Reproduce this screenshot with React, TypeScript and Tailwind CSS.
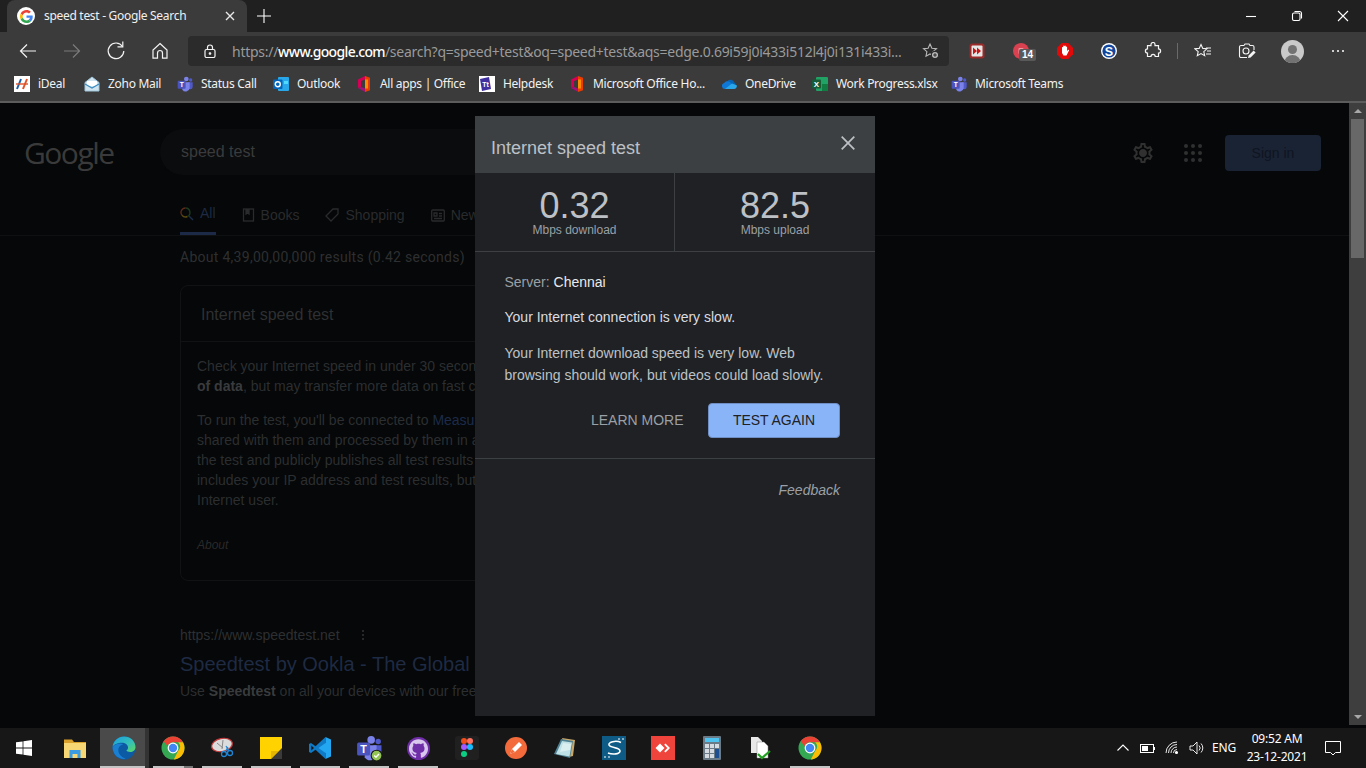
import { ReactNode } from "react";
import { SiGithub } from "react-icons/si";

const ui = "font-['Noto_Sans','Open_Sans',sans-serif]";
const arial = "font-['Liberation_Sans',Arial,sans-serif]";

function GoogleG({ size = 16 }: { size?: number }) {
  return (
    <svg width={size} height={size} viewBox="0 0 48 48">
      <path fill="#EA4335" d="M24 9.5c3.54 0 6.71 1.22 9.21 3.6l6.85-6.85C35.9 2.38 30.47 0 24 0 14.62 0 6.51 5.38 2.56 13.22l7.98 6.19C12.43 13.72 17.74 9.5 24 9.5z" />
      <path fill="#4285F4" d="M46.98 24.55c0-1.57-.15-3.09-.38-4.55H24v9.02h12.94c-.58 2.96-2.26 5.48-4.78 7.18l7.73 6c4.51-4.18 7.09-10.36 7.09-17.65z" />
      <path fill="#FBBC05" d="M10.53 28.59c-.48-1.45-.76-2.99-.76-4.59s.27-3.14.76-4.59l-7.98-6.19C.92 16.46 0 20.12 0 24c0 3.88.92 7.54 2.56 10.78l7.97-6.19z" />
      <path fill="#34A853" d="M24 48c6.48 0 11.93-2.13 15.89-5.81l-7.73-6c-2.15 1.45-4.92 2.3-8.16 2.3-6.26 0-11.57-4.22-13.47-9.91l-7.98 6.19C6.51 42.62 14.62 48 24 48z" />
    </svg>
  );
}

function Chrome() {
  return (
    <svg width="24" height="24" viewBox="0 0 24 24">
      <circle cx="12" cy="12" r="11.5" fill="#34a853" />
      <path fill="#ea4335" d="M12 .5a11.5 11.5 0 0 1 10 5.8H12a5.7 5.7 0 0 0-5.3 3.6L2.6 5.4A11.5 11.5 0 0 1 12 .5z" />
      <path fill="#fbbc05" d="M22 6.3a11.5 11.5 0 0 1-9.2 17.2l4.3-8.5a5.7 5.7 0 0 0 .1-8.7z" />
      <circle cx="12" cy="12" r="5.4" fill="#fff" />
      <circle cx="12" cy="12" r="4.2" fill="#4285f4" />
    </svg>
  );
}

function Edge() {
  return (
    <svg width="24" height="24" viewBox="0 0 24 24">
      <defs>
        <linearGradient id="edgeTop" x1="0" y1="0" x2="1" y2="1">
          <stop offset="0" stopColor="#1b9de2" />
          <stop offset="0.6" stopColor="#35c1b4" />
          <stop offset="1" stopColor="#5fd85a" />
        </linearGradient>
      </defs>
      <circle cx="12" cy="12" r="11.5" fill="#0c59a4" />
      <path fill="url(#edgeTop)" d="M.6 11C1.2 5 6 .5 12 .5c6.4 0 11.5 4.8 11.5 10.5 0 3.2-2.6 5-5.4 5-1.8 0-3.4-.6-3.8-1.4 1.2-.8 1.7-1.9 1.7-3.1 0-2.8-3-4.7-6-4.7C5.5 6.8 1.8 8.5.6 11z" />
      <path fill="#1a7fd0" d="M.6 11c1.5-2.2 4.5-3.4 7.3-3.4 1.2 0 2.3.3 3.2.8-3.3.5-4.8 3-4.8 5.6 0 3.7 3 7.4 7.4 8.7-.5.2-1 .3-1.7.3C5.6 23 .5 18 .6 11z" />
    </svg>
  );
}

function Teams({ size = 16, check = false }: { size?: number; check?: boolean }) {
  return (
    <svg width={size} height={size} viewBox="0 0 24 24">
      <circle cx="14" cy="4.5" r="3.5" fill="#7b83eb" />
      <circle cx="20.5" cy="6" r="2.5" fill="#5059c9" />
      <path fill="#5059c9" d="M16 9.5h7.5v7a3.5 3.5 0 0 1-7 0z" />
      <path fill="#7b83eb" d="M8 9.5h11v9a6 6 0 0 1-11 2z" />
      <rect x="1" y="7" width="12" height="12" rx="1.5" fill="#4b53bc" />
      <text x="7" y="16.5" textAnchor="middle" fontSize="10" fontWeight="700" fill="#fff" fontFamily="Liberation Sans">T</text>
      {check && (
        <>
          <circle cx="19" cy="19" r="5" fill="#92c353" stroke="#171717" strokeWidth="1" />
          <path d="M16.8 19l1.6 1.6 2.8-3" stroke="#fff" strokeWidth="1.3" fill="none" />
        </>
      )}
    </svg>
  );
}

function Office() {
  return (
    <svg width="16" height="16" viewBox="0 0 16 16">
      <path fill="#eb3c00" d="M9 0l5 1.8v12.4L9 16z" />
      <path fill="#ff8c00" d="M9 3.5H12v9H9z" />
      <path fill="#d40055" d="M2 3.4L9 0v3.5L5 5v6l-3 1z" />
      <path fill="#a0127a" d="M2 12l7 4v-3.5L5 11z" />
    </svg>
  );
}

function BookmarkIcon({ name }: { name: string }) {
  if (name === "ideal")
    return (
      <div className="flex h-4 w-4 items-center justify-center bg-white">
        <svg width="14" height="12" viewBox="0 0 14 12" fill="none" strokeWidth="2">
          <path d="M6 1L2 11" stroke="#1b5fa8" />
          <path d="M12 1L8 11" stroke="#e0532a" />
          <path d="M1 6h12" stroke="#e0532a" strokeWidth="1.4" />
        </svg>
      </div>
    );
  if (name === "zoho")
    return (
      <svg width="16" height="16" viewBox="0 0 16 16" fill="none">
        <path d="M1 6.5L8 1l7 5.5V15H1z" fill="#cfe3ee" stroke="#9ec6dc" />
        <rect x="3" y="5" width="10" height="5" fill="#fff" />
        <path d="M1 8l7 4 7-4" stroke="#3c8cc0" strokeWidth="1.3" />
      </svg>
    );
  if (name === "teams") return <Teams />;
  if (name === "outlook")
    return (
      <svg width="16" height="16" viewBox="0 0 16 16">
        <rect x="5" y="1" width="11" height="14" rx="1" fill="#28a8ea" />
        <rect x="0" y="3.5" width="9.5" height="9.5" rx="1" fill="#0364b8" />
        <circle cx="4.75" cy="8.25" r="2.5" fill="none" stroke="#fff" strokeWidth="1.4" />
        <rect x="11" y="5" width="4" height="3" fill="#50d9ff" />
      </svg>
    );
  if (name === "office") return <Office />;
  if (name === "helpdesk")
    return (
      <svg width="16" height="16" viewBox="0 0 16 16">
        <rect width="16" height="16" fill="#fff" />
        <path d="M1 3l9-2 2 12-9 2z" fill="#3f2f9f" />
        <text x="6.5" y="11" textAnchor="middle" fontSize="7" fontWeight="700" fill="#fff" fontFamily="Liberation Sans">Tt</text>
      </svg>
    );
  if (name === "onedrive")
    return (
      <svg width="16" height="16" viewBox="0 0 16 16">
        <path fill="#0364b8" d="M6.5 5a4 4 0 0 1 6.8 1.5A3 3 0 0 1 12.5 12H8z" />
        <path fill="#0f78d4" d="M4 13a3 3 0 0 1-.8-5.9A4 4 0 0 1 9 6l3 3.5L8 13z" />
        <path fill="#28a8ea" d="M4 13h9a2.9 2.9 0 0 0 2.7-3.8L11 7.5z" />
      </svg>
    );
  return (
    <svg width="16" height="16" viewBox="0 0 16 16">
      <rect x="4" y="1" width="12" height="14" rx="1" fill="#21a366" />
      <rect x="10" y="8" width="6" height="7" fill="#107c41" />
      <rect x="0" y="3.5" width="9" height="9" rx="1" fill="#185c37" />
      <text x="4.5" y="11" textAnchor="middle" fontSize="8" fontWeight="700" fill="#fff" fontFamily="Liberation Sans">X</text>
    </svg>
  );
}

const bookmarks = [
  { name: "ideal", label: "iDeal", w: "w-[70px]" },
  { name: "zoho", label: "Zoho Mail", w: "w-[93px]" },
  { name: "teams", label: "Status Call", w: "w-[96px]" },
  { name: "outlook", label: "Outlook", w: "w-[83px]" },
  { name: "office", label: "All apps | Office", w: "w-[123px]" },
  { name: "helpdesk", label: "Helpdesk", w: "w-[90px]" },
  { name: "office", label: "Microsoft Office Ho...", w: "w-[152px]" },
  { name: "onedrive", label: "OneDrive", w: "w-[91px]" },
  { name: "excel", label: "Work Progress.xlsx", w: "w-[139px]" },
  { name: "teams", label: "Microsoft Teams", w: "w-[130px]" },
];

function Stroke({ children, size = 20, box = 20 }: { children: ReactNode; size?: number; box?: number }) {
  return (
    <svg width={size} height={size} viewBox={`0 0 ${box} ${box}`} fill="none" stroke="currentColor" strokeWidth="1.1">
      {children}
    </svg>
  );
}

function TitleBar() {
  return (
    <div className="flex h-8 bg-[#202020] pl-[7px] text-white">
      <div className="flex w-[240px] items-center rounded-t-lg bg-[#3b3b3b] pl-[10px]">
        <div className="flex h-[18px] w-[18px] items-center justify-center rounded-full bg-white">
          <GoogleG size={13} />
        </div>
        <span className={`${ui} ml-[9px] flex-1 text-[12px] tracking-[-0.3px] text-[#f0f0f0]`}>speed test - Google Search</span>
        <div className="mr-[9px] text-[#e8e8e8]">
          <Stroke size={16} box={16}>
            <path d="M4 4l8 8M12 4l-8 8" strokeWidth="1.4" />
          </Stroke>
        </div>
      </div>
      <div className="ml-[8px] flex w-[18px] items-center justify-center">
        <Stroke size={16} box={16}>
          <path d="M8 1v14M1 8h14" strokeWidth="1.1" />
        </Stroke>
      </div>
      <div className="ml-auto flex">
        <div className="flex w-[46px] items-center justify-center">
          <Stroke size={12} box={12}><path d="M1 6.5h10" /></Stroke>
        </div>
        <div className="flex w-[46px] items-center justify-center">
          <Stroke size={12} box={12}>
            <rect x="1.5" y="3" width="7.5" height="7.5" rx="1.5" />
            <path d="M3.5 1.5h5a2 2 0 0 1 2 2v5" />
          </Stroke>
        </div>
        <div className="flex w-[46px] items-center justify-center">
          <Stroke size={12} box={12}><path d="M1 1l10 10M11 1L1 11" /></Stroke>
        </div>
      </div>
    </div>
  );
}

function Ext({ children, wide = "w-[44px]" }: { children: ReactNode; wide?: string }) {
  return <div className={`relative flex ${wide} items-center justify-center`}>{children}</div>;
}

function Toolbar() {
  return (
    <div className="flex h-[36px] items-center bg-[#3b3b3b] pt-[2px] text-[#f4f4f4]">
      <div className="flex w-[188px] pl-[6px]">
        <Ext>
          <Stroke>
            <path d="M18 10H2.5M9 3.5L2.5 10 9 16.5" strokeWidth="1.2" />
          </Stroke>
        </Ext>
        <Ext>
          <div className="text-[#7b7b7b]">
            <Stroke><path d="M2 10h15.5M11 3.5l6.5 6.5-6.5 6.5" strokeWidth="1.2" /></Stroke>
          </div>
        </Ext>
        <Ext>
          <Stroke>
            <path d="M16.5 5.5A7.8 7.8 0 1 0 17.8 10" strokeWidth="1.2" />
            <path d="M11.5 5.8h5.3V.5" strokeWidth="1.2" />
          </Stroke>
        </Ext>
        <Ext>
          <Stroke>
            <path d="M10 2.5L17 9v8.2h-4.5V12a2.5 2.5 0 0 0-5 0v5.2H3V9z" strokeWidth="1.2" />
          </Stroke>
        </Ext>
      </div>
      <div className="flex h-[30px] w-[761px] items-center rounded bg-[#2b2b2b] pl-[15px]">
        <Stroke size={14} box={14}>
          <rect x="2" y="5.5" width="10" height="8" rx="1.5" strokeWidth="1.2" />
          <path d="M4.5 5.5V3.5a2.5 2.5 0 0 1 5 0v2" strokeWidth="1.2" />
          <circle cx="7" cy="9.5" r=".8" fill="currentColor" />
        </Stroke>
        <div className={`${ui} ml-[15px] w-[672px] whitespace-nowrap text-[14px] tracking-[-0.27px] text-[#9a9a9a]`}>
          https://<span className="font-medium tracking-[-0.65px] text-white">www.google.com</span>/search?q=speed+test&amp;oq=speed+test&amp;aqs=edge.0.69i59j0i433i512l4j0i131i433i...
        </div>
        <div className="ml-[18px] text-[#b8b8b8]">
          <Stroke size={18} box={18}>
            <path d="M8 2l1.9 4.2 4.6.5-3.4 3 .9 4.5L8 12l-4 2.2.9-4.5-3.4-3 4.6-.5z" />
            <circle cx="13" cy="13" r="3.6" fill="#b8b8b8" stroke="#2b2b2b" />
            <path d="M13 11.2v3.6M11.2 13h3.6" stroke="#2b2b2b" />
          </Stroke>
        </div>
      </div>
      <div className="ml-[6px] flex">
        <Ext>
          <svg width="16" height="16" viewBox="0 0 16 16">
            <rect x=".5" y=".5" width="15" height="15" rx="2.5" fill="#9c2a2a" />
            <rect x="2.5" y="2.5" width="11" height="11" rx="1" fill="#e6e6e6" />
            <path d="M4 4.5l4 3.5-4 3.5zM8 4.5l4 3.5-4 3.5z" fill="#c41818" />
          </svg>
        </Ext>
        <Ext>
          <svg width="16" height="16" viewBox="0 0 16 16">
            <circle cx="8" cy="8" r="8" fill="#d8414f" />
            <rect x="5.5" y="5" width="5" height="6" rx="1" fill="#eb9aa2" />
          </svg>
          <span className="absolute left-[20px] top-[9px] rounded-[2px] bg-[#595959] px-[3px] font-['Liberation_Sans'] text-[10px] font-bold leading-[12px] text-white">14</span>
        </Ext>
        <Ext>
          <svg width="16" height="16" viewBox="0 0 16 16">
            <path fill="#e10a0a" d="M4.7 0h6.6L16 4.7v6.6L11.3 16H4.7L0 11.3V4.7z" />
            <path fill="#fff" d="M5 7V4.5a.7.7 0 0 1 1.2-.2V3a.7.7 0 0 1 1.3 0 .7.7 0 0 1 1.3 0v1a.7.7 0 0 1 1.3 0v4l1-1c.7-.4 1.2.2.8.8L9.5 12.5H6.5L5 10z" />
          </svg>
        </Ext>
        <Ext>
          <svg width="16" height="16" viewBox="0 0 16 16">
            <circle cx="8" cy="8" r="8" fill="#fff" />
            <circle cx="8" cy="8" r="6.6" fill="#12469c" />
            <text x="8" y="12.5" textAnchor="middle" fontSize="12.5" fontWeight="700" fill="#fff" fontFamily="Liberation Sans">S</text>
          </svg>
        </Ext>
        <Ext>
          <Stroke size={18} box={18}>
            <path d="M7 2.5a2 2 0 0 1 4 0v1.2h3.5v3.2a2 2 0 0 1 0 4.2v3.4h-3.3a2 2 0 0 0-4.2 0H3.5v-3.4a2 2 0 0 1 0-4.2V3.7H7z" strokeWidth="1.2" />
          </Stroke>
        </Ext>
        <div className="my-auto ml-[2px] h-[16px] w-px bg-[#6a6a6a]" />
        <div className="ml-[3px] flex">
          <Ext>
            <Stroke size={18} box={18}>
              <path d="M7 2.5l1.8 3.9 4.2.4-3.2 2.8.9 4.1L7 11.6l-3.7 2.1.9-4.1L1 6.8l4.2-.4z" strokeWidth="1.1" />
              <path d="M12 6h5M13 9h4M12 12h5" strokeWidth="1.1" />
            </Stroke>
          </Ext>
          <Ext>
            <Stroke size={18} box={18}>
              <path d="M6 3.5l1-1.5h4l1 1.5h2.5A1.5 1.5 0 0 1 16 5v3M9 15.5H3A1.5 1.5 0 0 1 1.5 14V5A1.5 1.5 0 0 1 3 3.5h3" strokeWidth="1.1" />
              <circle cx="8" cy="9" r="3" strokeWidth="1.1" />
              <path d="M10 16l.6-2.5 5-5 2 2-5 5z" fill="currentColor" stroke="none" />
            </Stroke>
          </Ext>
          <Ext wide="w-[46px]">
            <div className="relative h-[23px] w-[23px] overflow-hidden rounded-full bg-[#c9c9c9]">
              <div className="mx-auto mt-[5px] h-[9px] w-[9px] rounded-full bg-[#727272]" />
              <div className="mx-auto mt-[1px] h-[10px] w-[17px] rounded-t-full bg-[#727272]" />
            </div>
          </Ext>
          <Ext wide="w-[46px]">
            <div className="flex gap-[3px]">
              <div className="h-[2px] w-[2px] rounded-full bg-white" />
              <div className="h-[2px] w-[2px] rounded-full bg-white" />
              <div className="h-[2px] w-[2px] rounded-full bg-white" />
            </div>
          </Ext>
        </div>
      </div>
    </div>
  );
}

function BookmarksBar() {
  return (
    <div className="flex h-[35px] items-center border-b-2 border-[#5c5c5c] bg-[#3b3b3b] pb-[1px] pl-[14px]">
      {bookmarks.map((b) => (
        <div key={b.label} className={`flex ${b.w} items-center`}>
          <div className="h-4 w-4 shrink-0">
            <BookmarkIcon name={b.name} />
          </div>
          <span className={`${ui} ml-2 whitespace-nowrap text-[12px] tracking-[-0.3px] text-[#f2f2f2]`}>{b.label}</span>
        </div>
      ))}
    </div>
  );
}

function TabLink({ icon, label, active = false }: { icon: ReactNode; label: string; active?: boolean }) {
  return (
    <div className={`flex h-full items-center gap-[6px] pb-[3px] ${active ? "border-b-[3px] border-[#1d2a47]" : ""}`}>
      {icon}
      <span className={`${arial} text-[14px] ${active ? "text-[#1e2a44]" : "text-[#2a2b2d]"}`}>{label}</span>
    </div>
  );
}

function Background() {
  return (
    <div className="flex-1 overflow-hidden">
      <div className="flex h-[72px] items-start pl-[24px] pr-[28px] pt-[26px]">
        <div className="flex h-[46px] w-[136px] items-center font-['Open_Sans',sans-serif] text-[30px] tracking-[-1.5px] text-[#3a3a3a]">Google</div>
        <div className={`${arial} flex h-[46px] w-[690px] items-center rounded-full bg-[#0b0c0d] pl-[21px] text-[16px] text-[#3a3b3c]`}>speed test</div>
        <div className="ml-auto mt-[6px] flex items-center text-[#303030]">
          <svg width="24" height="24" viewBox="0 0 24 24" fill="currentColor">
            <path d="M19.43 12.98c.04-.32.07-.64.07-.98 0-.34-.03-.66-.07-.98l2.11-1.65c.19-.15.24-.42.12-.64l-2-3.46c-.09-.16-.26-.25-.44-.25-.06 0-.12.01-.17.03l-2.49 1c-.52-.4-1.08-.73-1.69-.98l-.38-2.65C14.46 2.18 14.25 2 14 2h-4c-.25 0-.46.18-.49.42l-.38 2.65c-.61.25-1.17.59-1.69.98l-2.49-1c-.06-.02-.12-.03-.18-.03-.17 0-.34.09-.43.25l-2 3.46c-.13.22-.07.49.12.64l2.11 1.65c-.04.32-.07.65-.07.98 0 .33.03.66.07.98l-2.11 1.65c-.19.15-.24.42-.12.64l2 3.46c.09.16.26.25.44.25.06 0 .12-.01.17-.03l2.49-1c.52.4 1.08.73 1.69.98l.38 2.65c.03.24.24.42.49.42h4c.25 0 .46-.18.49-.42l.38-2.65c.61-.25 1.17-.59 1.69-.98l2.49 1c.06.02.12.03.18.03.17 0 .34-.09.43-.25l2-3.46c.12-.22.07-.49-.12-.64l-2.11-1.65zm-1.98-1.71c.04.31.05.52.05.73 0 .21-.02.43-.05.73l-.14 1.13.89.7 1.08.84-.7 1.21-1.27-.51-1.04-.42-.9.68c-.43.32-.84.56-1.25.73l-1.06.43-.16 1.13-.2 1.35h-1.4l-.19-1.35-.16-1.13-1.06-.43c-.43-.18-.83-.41-1.23-.71l-.91-.7-1.06.43-1.27.51-.7-1.21 1.08-.84.89-.7-.14-1.13c-.03-.31-.05-.54-.05-.74s.02-.43.05-.73l.14-1.13-.89-.7-1.08-.84.7-1.21 1.27.51 1.04.42.9-.68c.43-.32.84-.56 1.25-.73l1.06-.43.16-1.13.2-1.35h1.39l.19 1.35.16 1.13 1.06.43c.43.18.83.41 1.23.71l.91.7 1.06-.43 1.27-.51.7 1.21-1.07.85-.89.7.14 1.13zM12 8c-2.21 0-4 1.79-4 4s1.79 4 4 4 4-1.79 4-4-1.79-4-4-4z" />
          </svg>
          <div className="ml-[29px] grid grid-cols-3 gap-[3px]">
            {Array.from({ length: 9 }).map((_, i) => (
              <div key={i} className="h-[4px] w-[4px] rounded-full bg-[#303030]" />
            ))}
          </div>
          <div className={`${arial} ml-[23px] flex h-[36px] w-[96px] items-center justify-center rounded bg-[#1a2333] text-[14px] text-[#0f1522]`}>Sign in</div>
        </div>
      </div>
      <div className="flex h-[61px] items-end border-b border-[#0e1011] pl-[180px]">
        <div className="flex h-[37px] gap-[26px]">
          <TabLink
            active
            label="All"
            icon={
              <svg width="14" height="14" viewBox="0 0 14 14" fill="none" strokeWidth="1.4">
                <path d="M5.5 1a4.5 4.5 0 0 0-3.5 7.3" stroke="#5a2a1c" />
                <path d="M2 8.3A4.5 4.5 0 0 0 7.5 9.5" stroke="#5a4a10" />
                <path d="M7.5 9.5A4.5 4.5 0 0 0 5.5 1" stroke="#1c3a20" />
                <path d="M9 9l4 4" stroke="#1c2d4a" />
              </svg>
            }
          />
          <TabLink
            label="Books"
            icon={
              <svg width="13" height="14" viewBox="0 0 13 14" fill="none" stroke="#2a2b2d" strokeWidth="1.3">
                <rect x="1.5" y="1" width="10" height="12" />
                <path d="M4 1v5l1.5-1L7 6V1" fill="#2a2b2d" />
              </svg>
            }
          />
          <TabLink
            label="Shopping"
            icon={
              <svg width="14" height="14" viewBox="0 0 14 14" fill="none" stroke="#2a2b2d" strokeWidth="1.3">
                <path d="M8 1h5v5l-7 7-5-5z" />
              </svg>
            }
          />
          <TabLink
            label="News"
            icon={
              <svg width="14" height="13" viewBox="0 0 14 13" fill="none" stroke="#2a2b2d" strokeWidth="1.3">
                <rect x=".7" y="1" width="12.6" height="11" rx="1" />
                <path d="M3 4h3v3H3zM8 4.5h3M8 7h3M3 9.5h8" />
              </svg>
            }
          />
        </div>
      </div>
      <div className="pl-[180px]">
        <div className="w-[295px] overflow-hidden">
          <div className="w-[652px]">
            <p className="mt-[12px] font-['Roboto',sans-serif] text-[14px] leading-[18px] tracking-[0.28px] text-[#2e2f31]">About 4,39,00,00,000 results (0.42 seconds)</p>
            <div className={`${arial} mt-[19px] h-[296px] rounded-lg border border-[#101214]`}>
              <div className="flex h-[56px] items-center border-b border-[#101214] pl-[20px] pt-[3px] text-[16px] text-[#2f3032]">Internet speed test</div>
              <div className="px-[16px] pt-[14px] text-[14px] leading-[20px] text-[#2c2e30]">
                <p className="whitespace-nowrap">Check your Internet speed in under 30 seconds. The test usually transfers less</p>
                <p className="whitespace-nowrap">
                  <b className="text-[#3a3b3d]">of data</b>, but may transfer more data on fast connections.
                </p>
                <p className="mt-[14px] whitespace-nowrap">
                  To run the test, you'll be connected to <span className="text-[#1d2b4a]">Measurement Lab</span> and your IP address will be
                </p>
                <p className="whitespace-nowrap">shared with them and processed by them in accordance with their privacy policy. M-Lab conducts</p>
                <p className="whitespace-nowrap">the test and publicly publishes all test results to promote Internet research. Published information</p>
                <p className="whitespace-nowrap">includes your IP address and test results, but doesn't include any other information about you as an</p>
                <p>Internet user.</p>
                <p className="mt-[25px] text-[12px] italic text-[#2a2a2a]">About</p>
              </div>
            </div>
            <div className={`${arial} mt-[45px]`}>
              <div className="flex items-center text-[14px] leading-[18px] text-[#2e2f31]">
                https://www.speedtest.net
                <div className="ml-[22px] flex flex-col gap-[2px]">
                  <div className="h-[2px] w-[2px] rounded-full bg-[#343434]" />
                  <div className="h-[2px] w-[2px] rounded-full bg-[#343434]" />
                  <div className="h-[2px] w-[2px] rounded-full bg-[#343434]" />
                </div>
              </div>
              <p className="mt-[7px] whitespace-nowrap text-[20px] leading-[26px] text-[#1f2a43]">Speedtest by Ookla - The Global Broadband Speed Test</p>
              <p className="mt-[3px] whitespace-nowrap text-[14px] leading-[22px] text-[#2c2e30]">
                Use <b className="text-[#3a3b3d]">Speedtest</b> on all your devices with our free desktop and mobile apps.
              </p>
            </div>
          </div>
        </div>
      </div>
    </div>
  );
}

function Scrollbar() {
  return (
    <div className="flex w-[17px] flex-col items-center bg-[#3e3e3e]">
      <div className="mt-[6px] h-0 w-0 border-x-[4px] border-b-[4px] border-x-transparent border-b-[#a8a8a8]" />
      <div className="mt-[6px] h-[139px] w-[13px] bg-[#686868]" />
      <div className="mb-[6px] mt-auto h-0 w-0 border-x-[4px] border-t-[4px] border-x-transparent border-t-[#a8a8a8]" />
    </div>
  );
}

function Dialog() {
  return (
    <div className={`${arial} absolute left-[475px] top-[13px] h-[600px] w-[400px] bg-[#202124]`}>
      <div className="flex h-[57px] items-center justify-between bg-[#3c4043] pl-[16px] pr-[20px]">
        <span className="mt-[7px] text-[18px] text-[#bdc1c6]">Internet speed test</span>
        <div className="mb-[3px] text-[#bdc1c6]">
          <Stroke size={14} box={14}>
            <path d="M.7.7l12.6 12.6M13.3.7L.7 13.3" strokeWidth="1.7" />
          </Stroke>
        </div>
      </div>
      <div className="flex h-[79px] border-b border-[#3c4043]">
        <div className="flex w-[200px] flex-col items-center border-r border-[#3c4043] pt-[14px]">
          <span className="text-[36px] leading-[37px] text-[#bdc1c6]">0.32</span>
          <span className="text-[12px] leading-[12px] text-[#9aa0a6]">Mbps download</span>
        </div>
        <div className="flex flex-1 flex-col items-center pt-[14px]">
          <span className="text-[36px] leading-[37px] text-[#bdc1c6]">82.5</span>
          <span className="text-[12px] leading-[12px] text-[#9aa0a6]">Mbps upload</span>
        </div>
      </div>
      <div className="h-[207px] border-b border-[#3c4043] pl-[29.5px] pr-[30px] pt-[20px] text-[14px] text-[#bdc1c6]">
        <p className="leading-[20px] text-[#9aa0a6]">
          Server: <span className="text-[#e8eaed]">Chennai</span>
        </p>
        <p className="mt-[15px] leading-[20px] text-[#dadce0]">Your Internet connection is very slow.</p>
        <p className="mt-[15px] leading-[22px]">
          Your Internet download speed is very low. Web
          <br />
          browsing should work, but videos could load slowly.
        </p>
        <div className="mt-[17px] flex items-center justify-end pr-[5px]">
          <span className="text-[#9aa0a6]">LEARN MORE</span>
          <div className="ml-[24.5px] flex h-[35px] w-[132px] items-center justify-center rounded border border-[#6f8fc4] bg-[#8ab4f8] text-[#202124]">TEST AGAIN</div>
        </div>
      </div>
      <div className="flex justify-end pr-[35px] pt-[23px] text-[14px] italic leading-[16px] text-[#9aa0a6]">Feedback</div>
    </div>
  );
}

function Page() {
  return (
    <div className="relative flex h-[622px] bg-[#050708]">
      <Background />
      <Scrollbar />
      <Dialog />
    </div>
  );
}

function TaskItem({ children, run = false, active = false, split = false }: { children: ReactNode; run?: boolean; active?: boolean; split?: boolean }) {
  return (
    <div className={`relative flex h-[40px] w-[49px] items-center justify-center pr-px ${active ? "bg-[#4a4a4a]" : ""}`}>
      {active && <div className="absolute inset-y-0 right-0 w-[4px] bg-[#333333]" />}
      <div className="relative flex">{children}</div>
      {run && !active && !split && <div className="absolute bottom-0 left-[4px] h-[2px] w-[40px] bg-[#c4c4c4]" />}
      {active && <div className="absolute bottom-0 left-0 h-[2px] w-[45px] bg-[#c4c4c4]" />}
      {split && (
        <div className="absolute bottom-0 left-[4px] flex h-[2px] w-[40px]">
          <div className="w-[31px] bg-[#c4c4c4]" />
          <div className="flex-1 bg-[#777777]" />
        </div>
      )}
    </div>
  );
}

function Taskbar() {
  return (
    <div className="flex h-[43px] flex-col bg-[#050708]">
      <div className="mt-[3px] flex h-[40px] items-center bg-[#171717]">
        <div className="flex h-full w-[51px] items-center pl-[16px]">
          <svg width="16" height="16" viewBox="0 0 16 16" fill="#fff">
            <path d="M0 2.3l6.6-.9v6.2H0zM7.4 1.300L16 0v7.600H7.400zM0 8.400h6.600v6.200L0 13.700zM7.400 8.400H16V16l-8.600-1.200z" />
          </svg>
        </div>
        <TaskItem>
          <svg width="22" height="20" viewBox="0 0 22 20">
            <path fill="#d9a02a" d="M0 1.5h8l2 2.5h12v3H0z" />
            <path fill="#f7d774" d="M0 5h22v15H0z" />
            <path fill="#3a9be0" d="M5.5 12h11v8h-3v-4h-5v4h-3z" />
          </svg>
        </TaskItem>
        <TaskItem active run>
          <Edge />
        </TaskItem>
        <TaskItem split>
          <Chrome />
        </TaskItem>
        <TaskItem run>
          <svg width="24" height="22" viewBox="0 0 24 22" fill="none">
            <ellipse cx="12" cy="8" rx="10.5" ry="6.5" transform="rotate(-12 12 8)" fill="#dcdcdc" stroke="#c23a3a" strokeWidth="1.2" />
            <path d="M7 6l6 5M13 3l-1 9" stroke="#888" />
            <circle cx="14" cy="17" r="2.5" stroke="#1f86d6" strokeWidth="1.3" />
            <circle cx="20" cy="16" r="2.5" stroke="#1f86d6" strokeWidth="1.3" />
            <path d="M15 15l3-5M19 14l-3-5" stroke="#1f86d6" strokeWidth="1.2" />
          </svg>
        </TaskItem>
        <TaskItem run>
          <svg width="22" height="22" viewBox="0 0 22 22">
            <path fill="#ffd200" d="M0 0h22v22H0z" />
            <path fill="#3a3a3a" d="M22 11v11H11z" />
            <path fill="#c99a00" d="M22 11l-11 11v-8h8z" opacity="0.5" />
          </svg>
        </TaskItem>
        <TaskItem run>
          <svg width="24" height="24" viewBox="0 0 24 24">
            <path fill="#0f7ac6" fillRule="evenodd" d="M17.5 1L7.5 10.300 3 7 1 8v8l2 1 4.500-3.300L17.500 23zM3.200 9.500L6 12l-2.800 2.500z" />
            <path fill="#22a7f0" d="M17.5 1L23 3.500v17L17.500 23 17.500 17 10.500 12l7-5z" />
          </svg>
        </TaskItem>
        <TaskItem run>
          <Teams size={26} check />
        </TaskItem>
        <TaskItem run>
          <div className="flex h-[23px] w-[23px] items-center justify-center rounded-full bg-[#6f2da8]">
            <SiGithub size={19} color="#d8c6ec" />
          </div>
        </TaskItem>
        <TaskItem>
          <svg width="24" height="24" viewBox="0 0 24 24">
            <rect width="24" height="24" rx="3" fill="#202020" />
            <circle cx="9" cy="5" r="3" fill="#f24e1e" />
            <circle cx="15" cy="5" r="3" fill="#ff7262" />
            <circle cx="9" cy="11" r="3" fill="#a259ff" />
            <circle cx="15" cy="11" r="3" fill="#1abcfe" />
            <circle cx="9" cy="18" r="3" fill="#0acf83" />
          </svg>
        </TaskItem>
        <TaskItem>
          <svg width="22" height="22" viewBox="0 0 22 22">
            <circle cx="11" cy="11" r="11" fill="#f46b3b" />
            <path d="M5 17l2-5 7-7 3 3-7 7z" fill="#fff" />
            <path d="M5 17l2-5 3 3z" fill="#f46b3b" />
          </svg>
        </TaskItem>
        <TaskItem>
          <svg width="24" height="24" viewBox="0 0 24 24">
            <path fill="#c9a86a" d="M9 2l13 2-2 16-4 1z" />
            <path fill="#4f8193" d="M1 18L8 3l12 2-3 17z" />
            <path fill="#bfe0e4" d="M3 18L9 5l10 1.500-2.500 14z" />
            <path fill="#eef8f8" d="M10 7l8 1-1 6-10 2z" opacity="0.6" />
          </svg>
        </TaskItem>
        <TaskItem>
          <svg width="24" height="24" viewBox="0 0 24 24">
            <rect width="24" height="24" fill="#0e5c85" />
            <path d="M19 6.500C14 4 6 6 7 9c1 3 11 2 11 6 0 3-7 4-12 2" fill="none" stroke="#fff" strokeWidth="1.6" />
            <path d="M16 3h2M20 3h2M2 21h2M6 21h2" stroke="#fff" />
          </svg>
        </TaskItem>
        <TaskItem>
          <svg width="24" height="24" viewBox="0 0 24 24">
            <rect width="24" height="24" fill="#ef443b" />
            <path fill="#fff" d="M9 7.500l4.500 4.500L9 16.500 4.500 12zM14.500 7.500l4.500 4.500-4.500 4.500-1.300-1.300 3.200-3.200-3.200-3.200z" />
          </svg>
        </TaskItem>
        <TaskItem>
          <svg width="20" height="24" viewBox="0 0 20 24">
            <rect width="18" height="24" x="1" rx="1" fill="#6b7a87" />
            <rect x="3" y="2" width="14" height="4" fill="#4fc3f0" />
            <path fill="#d5dbe0" d="M3 8h4v4H3zM8 8h4v4H8zM13 8h4v4h-4zM3 13h4v4H3zM8 13h4v4H8zM3 18h4v4H3zM8 18h4v4H8z" />
            <rect x="13" y="13" width="4" height="9" fill="#1e4f91" />
          </svg>
        </TaskItem>
        <TaskItem>
          <svg width="24" height="24" viewBox="0 0 24 24">
            <path fill="#e8e8e8" d="M2 1h7l4 4v12H2z" />
            <path fill="#fff" stroke="#888" strokeWidth=".5" d="M8 6h7l4 4v12H8z" />
            <path d="M9 18l4 4 8-7" fill="none" stroke="#22a022" strokeWidth="2.2" />
          </svg>
        </TaskItem>
        <TaskItem run>
          <Chrome />
        </TaskItem>
        <div className={`${ui} ml-auto flex h-full items-center text-white`}>
          <Stroke size={14} box={14}><path d="M1.5 9.5L7 4l5.500 5.500" strokeWidth="1.1" /></Stroke>
          <div className="ml-[10px] flex items-center">
            <div className="flex h-[9px] w-[14px] items-center border border-white pl-[1px]">
              <div className="h-[5px] w-[6px] bg-white" />
            </div>
            <div className="h-[3px] w-[1px] bg-white" />
          </div>
          <div className="ml-[10px]">
            <Stroke size={14} box={14}>
              <path d="M1 12a11 11 0 0 1 11-11M3.500 12A8.500 8.500 0 0 1 12 3.500M6 12a6 6 0 0 1 6-6M8.500 12A3.500 3.500 0 0 1 12 8.500" strokeWidth="0.9" />
              <circle cx="11.5" cy="11.5" r="1" fill="currentColor" />
            </Stroke>
          </div>
          <div className="ml-[10px]">
            <Stroke size={16} box={16}>
              <path d="M1 6h3l4-4v12l-4-4H1zM10 5.500a3.500 3.500 0 0 1 0 5M12 3.500a6.500 6.500 0 0 1 0 9" strokeWidth="0.9" />
            </Stroke>
          </div>
          <span className="ml-[7px] w-[28px] text-[12px] tracking-[-0.2px]">ENG</span>
          <div className="ml-[2px] flex w-[70px] flex-col items-center text-[12px] leading-[18px] tracking-[-0.2px]">
            <span>09:52 AM</span>
            <span>23-12-2021</span>
          </div>
          <div className="ml-[12px] mr-[24px]">
            <Stroke size={18} box={18}>
              <path d="M1.5 2.500h15v11h-5l-2.500 2.500-2.500-2.500h-5z" strokeWidth="1" />
            </Stroke>
          </div>
        </div>
      </div>
    </div>
  );
}

export default function App() {
  return (
    <main className="flex h-screen w-screen flex-col overflow-hidden">
      <TitleBar />
      <Toolbar />
      <BookmarksBar />
      <Page />
      <Taskbar />
    </main>
  );
}
